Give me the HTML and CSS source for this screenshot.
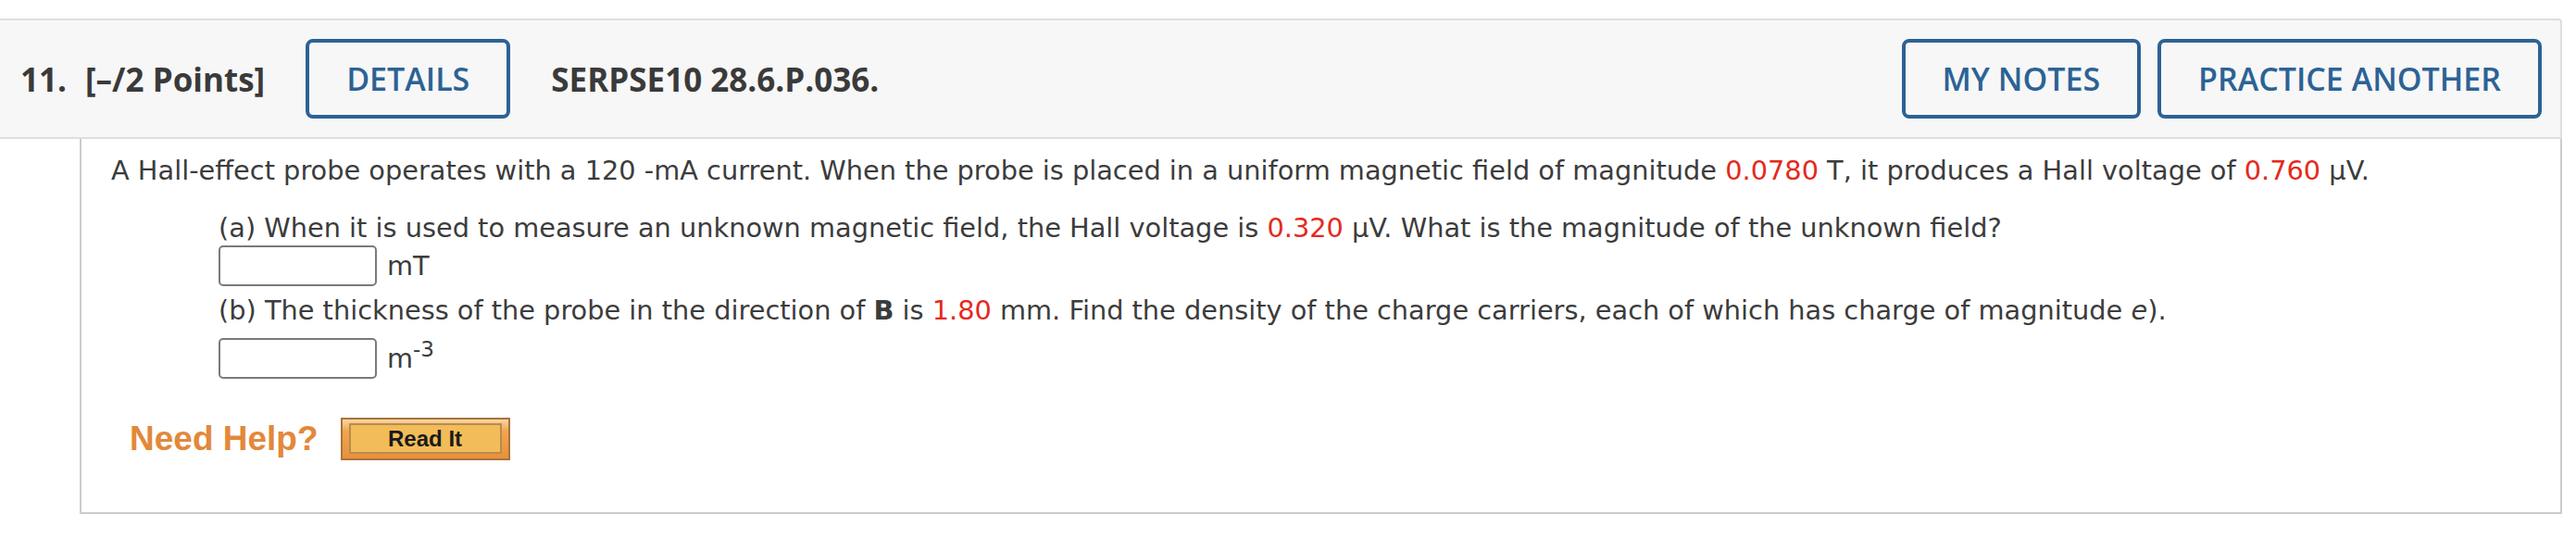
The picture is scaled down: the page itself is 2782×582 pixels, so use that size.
FILE: index.html
```html
<!DOCTYPE html>
<html>
<head>
<meta charset="utf-8">
<link rel="stylesheet" href="styles.css">
</head>
<body>
<div class="question">
  <div class="q-header">
    <span class="q-num">11.</span>
    <span class="q-points">[–/2 Points]</span>
    <button class="q-btn q-details">DETAILS</button>
    <span class="q-title">SERPSE10 28.6.P.036.</span>
    <span class="q-spacer"></span>
    <button class="q-btn">MY NOTES</button>
    <button class="q-btn">PRACTICE ANOTHER</button>
  </div>
  <div class="q-body">
    <p class="q-text">A Hall-effect probe operates with a 120 -mA current. When the probe is placed in a uniform magnetic field of magnitude <span class="num">0.0780</span> T, it produces a Hall voltage of <span class="num">0.760</span> µV.</p>
    <div class="q-part">
      <p class="q-text">(a) When it is used to measure an unknown magnetic field, the Hall voltage is <span class="num">0.320</span> µV. What is the magnitude of the unknown field?</p>
      <div class="answer-row">
        <input class="answer" type="text">
        <span class="unit">mT</span>
      </div>
      <p class="q-text part-b">(b) The thickness of the probe in the direction of <b>B</b> is <span class="num">1.80</span> mm. Find the density of the charge carriers, each of which has charge of magnitude <i>e</i>).</p>
      <div class="answer-row second">
        <input class="answer" type="text">
        <span class="unit">m<sup>-3</sup></span>
      </div>
    </div>
    <div class="help-row">
      <span class="need-help">Need Help?</span>
      <span class="read-it"><span class="read-it-inner">Read It</span></span>
    </div>
  </div>
</div>
</body>
</html>
```

FILE: styles.css
```css
html, body {
  margin: 0;
  padding: 0;
  background: #ffffff;
}

.question {
  margin-top: 20px;
  width: 2767px;
}

.q-header {
  display: flex;
  align-items: center;
  height: 126px;
  background: #f7f7f7;
  border-top: 2px solid #dedede;
  border-bottom: 2px solid #dedede;
  border-right: 2px solid #dedede;
  border-top-right-radius: 4px;
  padding-left: 22px;
  padding-right: 20px;
  font-family: "Open Sans", sans-serif;
  font-size: 35px;
  color: #3a3a3a;
}

.q-num {
  font-weight: 700;
}

.q-points {
  font-weight: 700;
  margin-left: 20px;
}

.q-title {
  font-weight: 700;
  margin-left: 44px;
}

.q-spacer {
  flex: 1;
}

.q-btn {
  font-family: "Open Sans", sans-serif;
  font-size: 34px;
  font-weight: 600;
  color: #2c6295;
  background: transparent;
  border: 4px solid #2c6295;
  border-radius: 8px;
  height: 86px;
  padding: 0 40px;
  margin-left: 18px;
}

.q-details {
  margin-left: 44px;
}

.q-body {
  margin-left: 86px;
  border-left: 2px solid #cccccc;
  border-right: 2px solid #cccccc;
  border-bottom: 2px solid #cccccc;
  padding: 17px 0 56px 32px;
  font-family: "DejaVu Sans", Verdana, sans-serif;
  font-size: 28.8px;
  line-height: 34px;
  color: #3c3c3c;
}

.q-text {
  margin: 0;
}

.num {
  color: #e5291c;
}

.q-part {
  margin-left: 116px;
  margin-top: 28px;
}

.answer-row {
  display: flex;
  align-items: center;
  margin-top: 2px;
}

.answer-row.second {
  margin-top: 13px;
}

.part-b {
  margin-top: 9px;
}

.answer {
  box-sizing: border-box;
  width: 171px;
  height: 44px;
  border: 2px solid #7a7a7a;
  border-radius: 5px;
  background: #ffffff;
  margin: 0;
  padding: 0;
}

.unit {
  margin-left: 11px;
}

.unit sup {
  font-size: 23px;
  line-height: 0;
  vertical-align: 12px;
}

.help-row {
  display: flex;
  align-items: center;
  margin-top: 42px;
  margin-left: 20px;
}

.need-help {
  font-family: "Liberation Sans", Arial, sans-serif;
  font-weight: 700;
  font-size: 37px;
  line-height: 40px;
  color: #e3883a;
}

.read-it {
  display: flex;
  box-sizing: border-box;
  width: 183px;
  height: 46px;
  margin-left: 24px;
  border: 2px solid #a8733a;
  background: linear-gradient(#fbd7a6 0%, #f0a54c 30%, #e8923c 100%);
  padding: 4px 7px 5px 7px;
}

.read-it-inner {
  flex: 1;
  display: flex;
  align-items: center;
  justify-content: center;
  border: 2px solid #b98b4f;
  background: #f2bd59;
  font-family: "Liberation Sans", Arial, sans-serif;
  font-weight: 700;
  font-size: 24px;
  color: #1b1b1b;
}
```
